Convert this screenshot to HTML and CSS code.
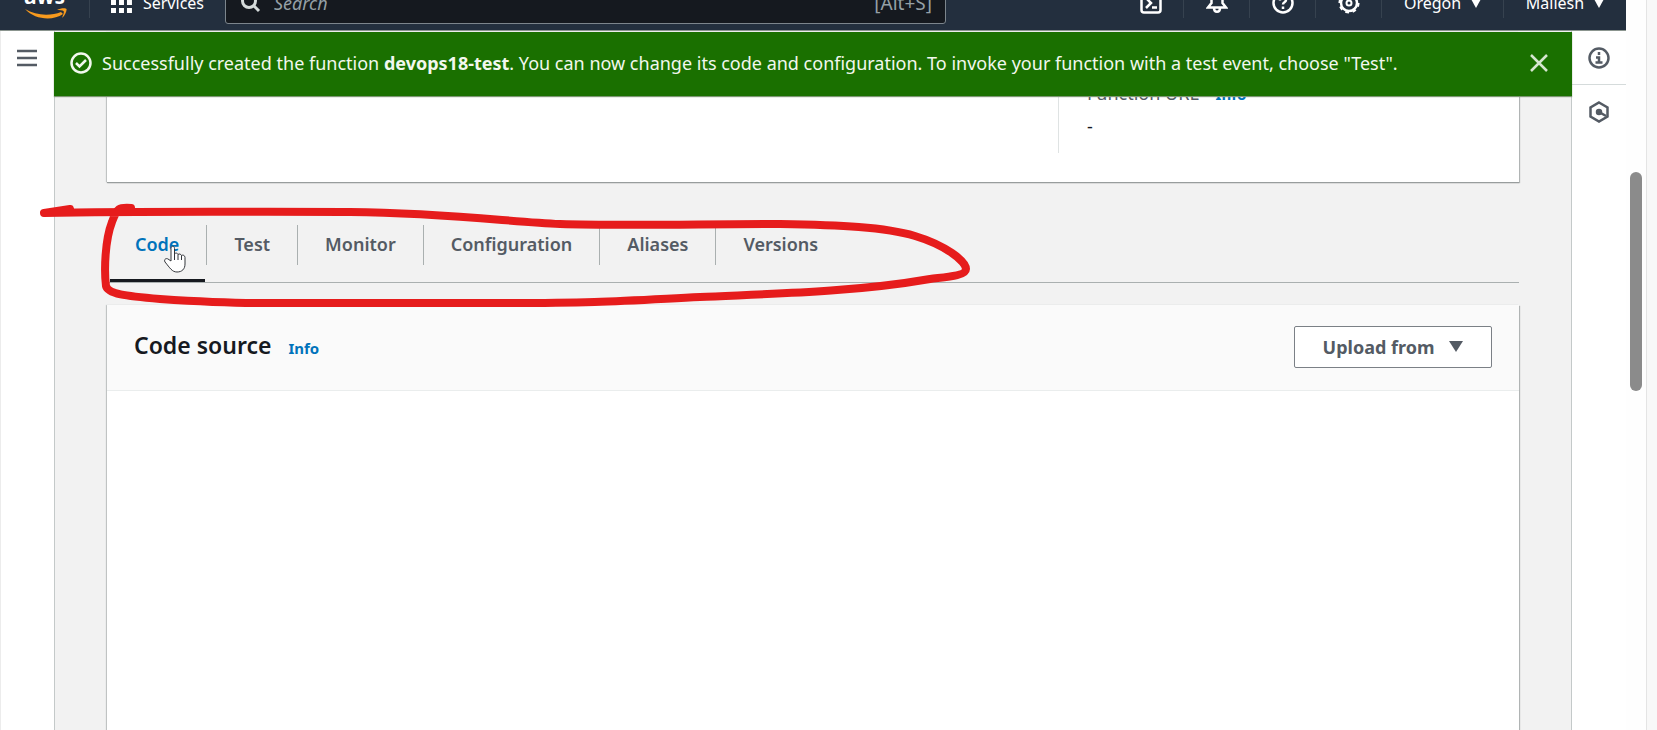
FILE: index.html
```html
<!DOCTYPE html>
<html lang="en">
<head>
<meta charset="utf-8">
<title>devops18-test - Lambda</title>
<link rel="stylesheet" href="styles.css">
</head>
<body>
<div class="window">
  <div class="console">
    <header class="topbar">
      <a class="logo" href="#" aria-label="AWS home">
        <span class="logo-text">aws</span>
        <svg class="logo-smile" viewBox="0 0 44 12" aria-hidden="true"><path d="M1 1C12 8 27 8 37 4l2 2C29 13 11 12 1 1z"/><path d="M33 2c3-2 9-2.500 9.500-1s-1.500 7-4.500 9c1-3 2.500-6 1.500-7s-4-1-6.500-1z"/></svg>
      </a>
      <button class="services" type="button">
        <svg class="grid-icon" viewBox="0 0 22 22" aria-hidden="true"><path d="M0 0h5v5H0zM8 0h5v5H8zM16 0h5v5h-5zM0 8h5v5H0zM8 8h5v5H8zM16 8h5v5h-5zM0 16h5v5H0zM8 16h5v5H8zM16 16h5v5h-5z"/></svg>
        Services
      </button>
      <label class="search">
        <svg class="search-icon" viewBox="0 0 20 20" aria-hidden="true"><circle cx="8" cy="8" r="6.5"/><path d="M12.500 12.500L18 18"/></svg>
        <input type="text" placeholder="Search" aria-label="Search">
        <span class="shortcut">[Alt+S]</span>
      </label>
      <nav class="tools">
        <button class="tool" type="button" aria-label="CloudShell"><svg viewBox="0 0 22 22"><rect x="1.500" y="1.500" width="19" height="19" rx="2.500"/><path d="M6 6l5 5-5 5M12 15.500h5"/></svg></button>
        <button class="tool" type="button" aria-label="Notifications"><svg viewBox="0 0 22 22"><path d="M2 15.500h18l-3.500-4.500V7a5.500 5.500 0 0 0-11 0v4zM8 16c0 5 6 5 6 0"/></svg></button>
        <button class="tool" type="button" aria-label="Help"><svg viewBox="0 0 22 22"><circle cx="11" cy="11" r="9.500"/><path d="M8 8.500c0-4 6-4 6-.5 0 2.500-3 2-3 4.500M11 14.500v2.500"/></svg></button>
        <button class="tool" type="button" aria-label="Settings"><svg viewBox="0 0 22 22"><circle cx="11" cy="11" r="8"/><circle class="teeth" cx="11" cy="11" r="9.550" pathLength="80"/><circle class="hub" cx="11" cy="11" r="2.500"/></svg></button>
        <button class="tool menu" type="button">Oregon <span class="caret"></span></button>
        <button class="tool menu" type="button">Mallesh <span class="caret"></span></button>
      </nav>
    </header>
    <div class="body">
      <aside class="side-left">
        <button class="icon-button" type="button" aria-label="Open navigation"><svg viewBox="0 0 22 22"><path d="M1 4h20M1 11h20M1 18h20"/></svg></button>
      </aside>
      <main class="main">
        <div class="flash" role="status">
          <svg class="flash-icon" viewBox="0 0 22 22" aria-hidden="true"><circle cx="11" cy="11" r="9.500"/><path d="M6 11l3.500 3.500L16 8"/></svg>
          <p class="flash-text">Successfully created the function <b>devops18-test</b>. You can now change its code and configuration. To invoke your function with a test event, choose "Test".</p>
          <button class="flash-close" type="button" aria-label="Dismiss"><svg viewBox="0 0 18 18"><path d="M1 1l16 16M17 1L1 17"/></svg></button>
        </div>
        <div class="content">
          <section class="card overview">
            <div class="details">
              <p class="detail-label">Function URL <a class="info" href="#">Info</a></p>
              <p class="detail-value">-</p>
            </div>
          </section>
          <nav class="tabs">
            <a class="tab active" href="#">Code</a>
            <a class="tab" href="#">Test</a>
            <a class="tab" href="#">Monitor</a>
            <a class="tab" href="#">Configuration</a>
            <a class="tab" href="#">Aliases</a>
            <a class="tab" href="#">Versions</a>
          </nav>
          <section class="card source">
            <div class="card-header">
              <div class="card-title">
                <h2>Code source</h2>
                <a class="info" href="#">Info</a>
              </div>
              <button class="upload" type="button">Upload from <span class="caret"></span></button>
            </div>
          </section>
        </div>
      </main>
      <aside class="side-right">
        <button class="icon-button" type="button" aria-label="Info"><svg viewBox="0 0 22 22"><circle cx="11" cy="11" r="9.500"/><path d="M11 5v3M8 10.500h3V16M7.500 15.500h7"/></svg></button>
        <button class="icon-button" type="button" aria-label="Tutorials"><svg viewBox="0 0 22 22"><path d="M11 1.500l8.500 5v9l-8.500 5-8.500-5v-9z"/><circle class="solid" cx="11" cy="11" r="2"/><path d="M12 11.500l6 3.500"/></svg></button>
      </aside>
    </div>
  </div>
  <div class="scroll-track"><div class="scroll-thumb"></div></div>
  <div class="edge"></div>
</div>
<svg class="marker" viewBox="0 0 1657 730" aria-hidden="true"><path d="M44 213L70 209M44 213C140 211 240 212 350 212C450 213 510 222 560 224C620 226 700 224 780 224C840 225 885 227 915 236C945 245 966 261 966 269C966 276 945 277 930 279C850 293 760 294 700 297C620 301 600 303 500 303L260 303C220 303 190 301 160 299C125 296 108 294 106 286C104 270 105 240 112 222C117 208 119 207 131 208"/></svg>
<svg class="pointer" viewBox="0 0 24 28" aria-hidden="true"><path d="M8 16V3.500c0-3 3.500-3 3.500 0V9c1-1.500 3-1 3.500.5 1-1 3-.5 3.500 1 1.500-1 3.500 0 3.500 2V19c0 5-3 8-8 8-5 0-7-4-12-10-1.500-3 1.500-4 3-3z"/><path d="M11.500 9v6M15 9.500V15M18.500 10.500V15"/></svg>
</body>
</html>
```
FILE: styles.css
```css
* { box-sizing: border-box; }

body {
  margin: 0;
  height: 100vh;
  overflow: hidden;
  font-family: "Noto Sans", "Open Sans", sans-serif;
  font-size: 18px;
  color: #16191f;
  background: #fff;
}

button { font: inherit; background: none; border: 0; padding: 0; color: inherit; }
a { text-decoration: none; color: inherit; }
p, h2 { margin: 0; }
svg { fill: none; stroke: currentColor; stroke-width: 2.5; display: block; }
.solid { fill: currentColor; }
.teeth { stroke-width: 2; stroke-dasharray: 5 5; }
.hub { stroke-width: 2; }

.window { display: flex; height: 100vh; }
.console { flex: 1; display: flex; flex-direction: column; min-width: 0; }

.topbar {
  display: flex;
  align-items: center;
  flex: none;
  height: 55px;
  margin-top: -24px;
  background: #232f3e;
  border-bottom: 1px solid #8b958f;
  color: #fff;
  font-size: 16px;
}
.logo { width: 90px; height: 30px; border-right: 1px solid #36424f; padding-left: 24px; }
.logo-text { display: block; height: 20px; font: bold 21px/17px "Noto Sans", sans-serif; }
.logo-smile { width: 44px; height: 12px; fill: #f79a1e; stroke: none; }
.services { display: flex; align-items: center; gap: 10px; padding: 0 21px; width: 135px; }
.grid-icon { width: 22px; height: 22px; fill: #fff; stroke: none; }
.search {
  display: flex;
  align-items: center;
  flex: 0 1 721px;
  height: 42px;
  padding: 0 13px 0 15px;
  gap: 13px;
  background: #15191f;
  border: 1px solid #7c858c;
  border-radius: 3px;
}
.search-icon { width: 20px; height: 20px; stroke-width: 3; color: #d5dbdb; }
.search input {
  flex: 1;
  min-width: 0;
  border: 0;
  padding: 0;
  background: none;
  outline: 0;
  color: #fff;
  font: italic 18px "Noto Sans", sans-serif;
}
.search input::placeholder { color: #95a0a6; opacity: 1; }
.shortcut { color: #95a0a6; font-size: 19px; }
.tools { display: flex; align-items: center; margin-left: auto; }
.tool {
  display: flex;
  align-items: center;
  justify-content: center;
  height: 30px;
  width: 66px;
  border-right: 1px solid #36424f;
}
.tool svg { width: 22px; height: 22px; }
.tool.menu { width: 122px; gap: 10px; }
.tool.menu:last-child { border: 0; }
.caret { border: 5px solid transparent; border-top: 9px solid currentColor; border-bottom: 0; }

.body { flex: 1; display: flex; min-height: 0; }
.side-left { width: 54px; border-left: 1px solid #ececec; }
.side-left .icon-button { height: 54px; padding-left: 15px; }
.side-right { width: 54px; }
.side-right .icon-button { display: flex; align-items: center; justify-content: center; width: 54px; height: 54px; }
.side-right .icon-button:first-child { border-bottom: 1px solid #d5dbdb; }
.icon-button { color: #545b64; }
.icon-button svg { width: 22px; height: 22px; }

.main {
  flex: 1;
  min-width: 0;
  display: flex;
  flex-direction: column;
  background: #f2f2f2;
  border-left: 1px solid #c4c9c9;
  border-right: 1px solid #c4c9c9;
}
.flash {
  display: flex;
  align-items: center;
  flex: none;
  height: 64px;
  margin: 1px -1px 0;
  padding: 0 24px 2px 16px;
  gap: 10px;
  background: #1a7000;
  color: #f2f8ee;
  z-index: 1;
  box-shadow: 0 1px 1px #7c9672;
}
.flash-icon { width: 22px; height: 22px; }
.flash-text { flex: 1; white-space: nowrap; font-size: 18px; }
.flash-close svg { width: 18px; height: 18px; color: #d6e6d0; }

.content { flex: 1; display: flex; flex-direction: column; padding: 0 52px; min-height: 0; }
.card { background: #fff; box-shadow: 0 1px 1px #989d9d, 1px 1px 1px #b5baba, -1px 0 1px #c8cccc; }
.overview { flex: none; height: 150px; margin-top: -64px; padding-top: 45px; display: flex; justify-content: flex-end; }
.details { width: 461px; height: 76px; border-left: 1px solid #dfe3e3; padding-left: 28px; }
.detail-label { color: #545b64; font-size: 18px; line-height: 32px; }
.detail-value { line-height: 32px; }
.info { color: #0073bb; font-weight: bold; font-size: 15px; }
.detail-label .info { margin-left: 12px; }

.tabs { display: flex; flex: none; height: 58px; margin-top: 43px; padding-left: 1px; border-bottom: 1px solid #aab0b0; }
.tab {
  position: relative;
  height: 40px;
  padding: 0 27px;
  border-right: 1px solid #aab0b0;
  color: #545b64;
  font-weight: 600;
  line-height: 38px;
}
.tab:last-child { border: 0; }
.tab.active { color: #0073bb; }
.tab.active::after { content: ""; position: absolute; left: 2px; right: 1px; bottom: -17px; height: 3px; background: #16191f; }

.source { flex: 1; margin-top: 22px; }
.card-header {
  display: flex;
  align-items: center;
  justify-content: space-between;
  height: 86px;
  padding: 0 27px 2px;
  background: #fafafa;
  border-bottom: 1px solid #eaeded;
}
.card-title { display: flex; align-items: baseline; gap: 17px; padding-bottom: 4px; }
.card-header h2 { font-size: 23px; font-weight: 600; }
.upload {
  display: flex;
  align-items: center;
  justify-content: center;
  gap: 15px;
  width: 198px;
  height: 42px;
  border: 1px solid #7b8086;
  border-radius: 2px;
  background: #fff;
  color: #545b64;
  font-weight: bold;
}
.upload .caret { border-width: 11px 7px 0; }

.scroll-track { width: 20px; padding: 172px 4px 0; background: #fefefe; }
.scroll-thumb { height: 219px; border-radius: 6px; background: #8b8b8b; }
.edge { width: 11px; background: #f8f8f8; border-left: 1px solid #e4e4e4; }

.marker { position: absolute; left: 0; top: 0; width: 1657px; height: 730px; color: #e61c1c; stroke-width: 8; stroke-linecap: round; stroke-linejoin: round; pointer-events: none; }
.pointer { position: absolute; left: 163px; top: 245px; width: 24px; height: 28px; fill: #fff; color: #33363b; stroke-width: 1; pointer-events: none; }
```
